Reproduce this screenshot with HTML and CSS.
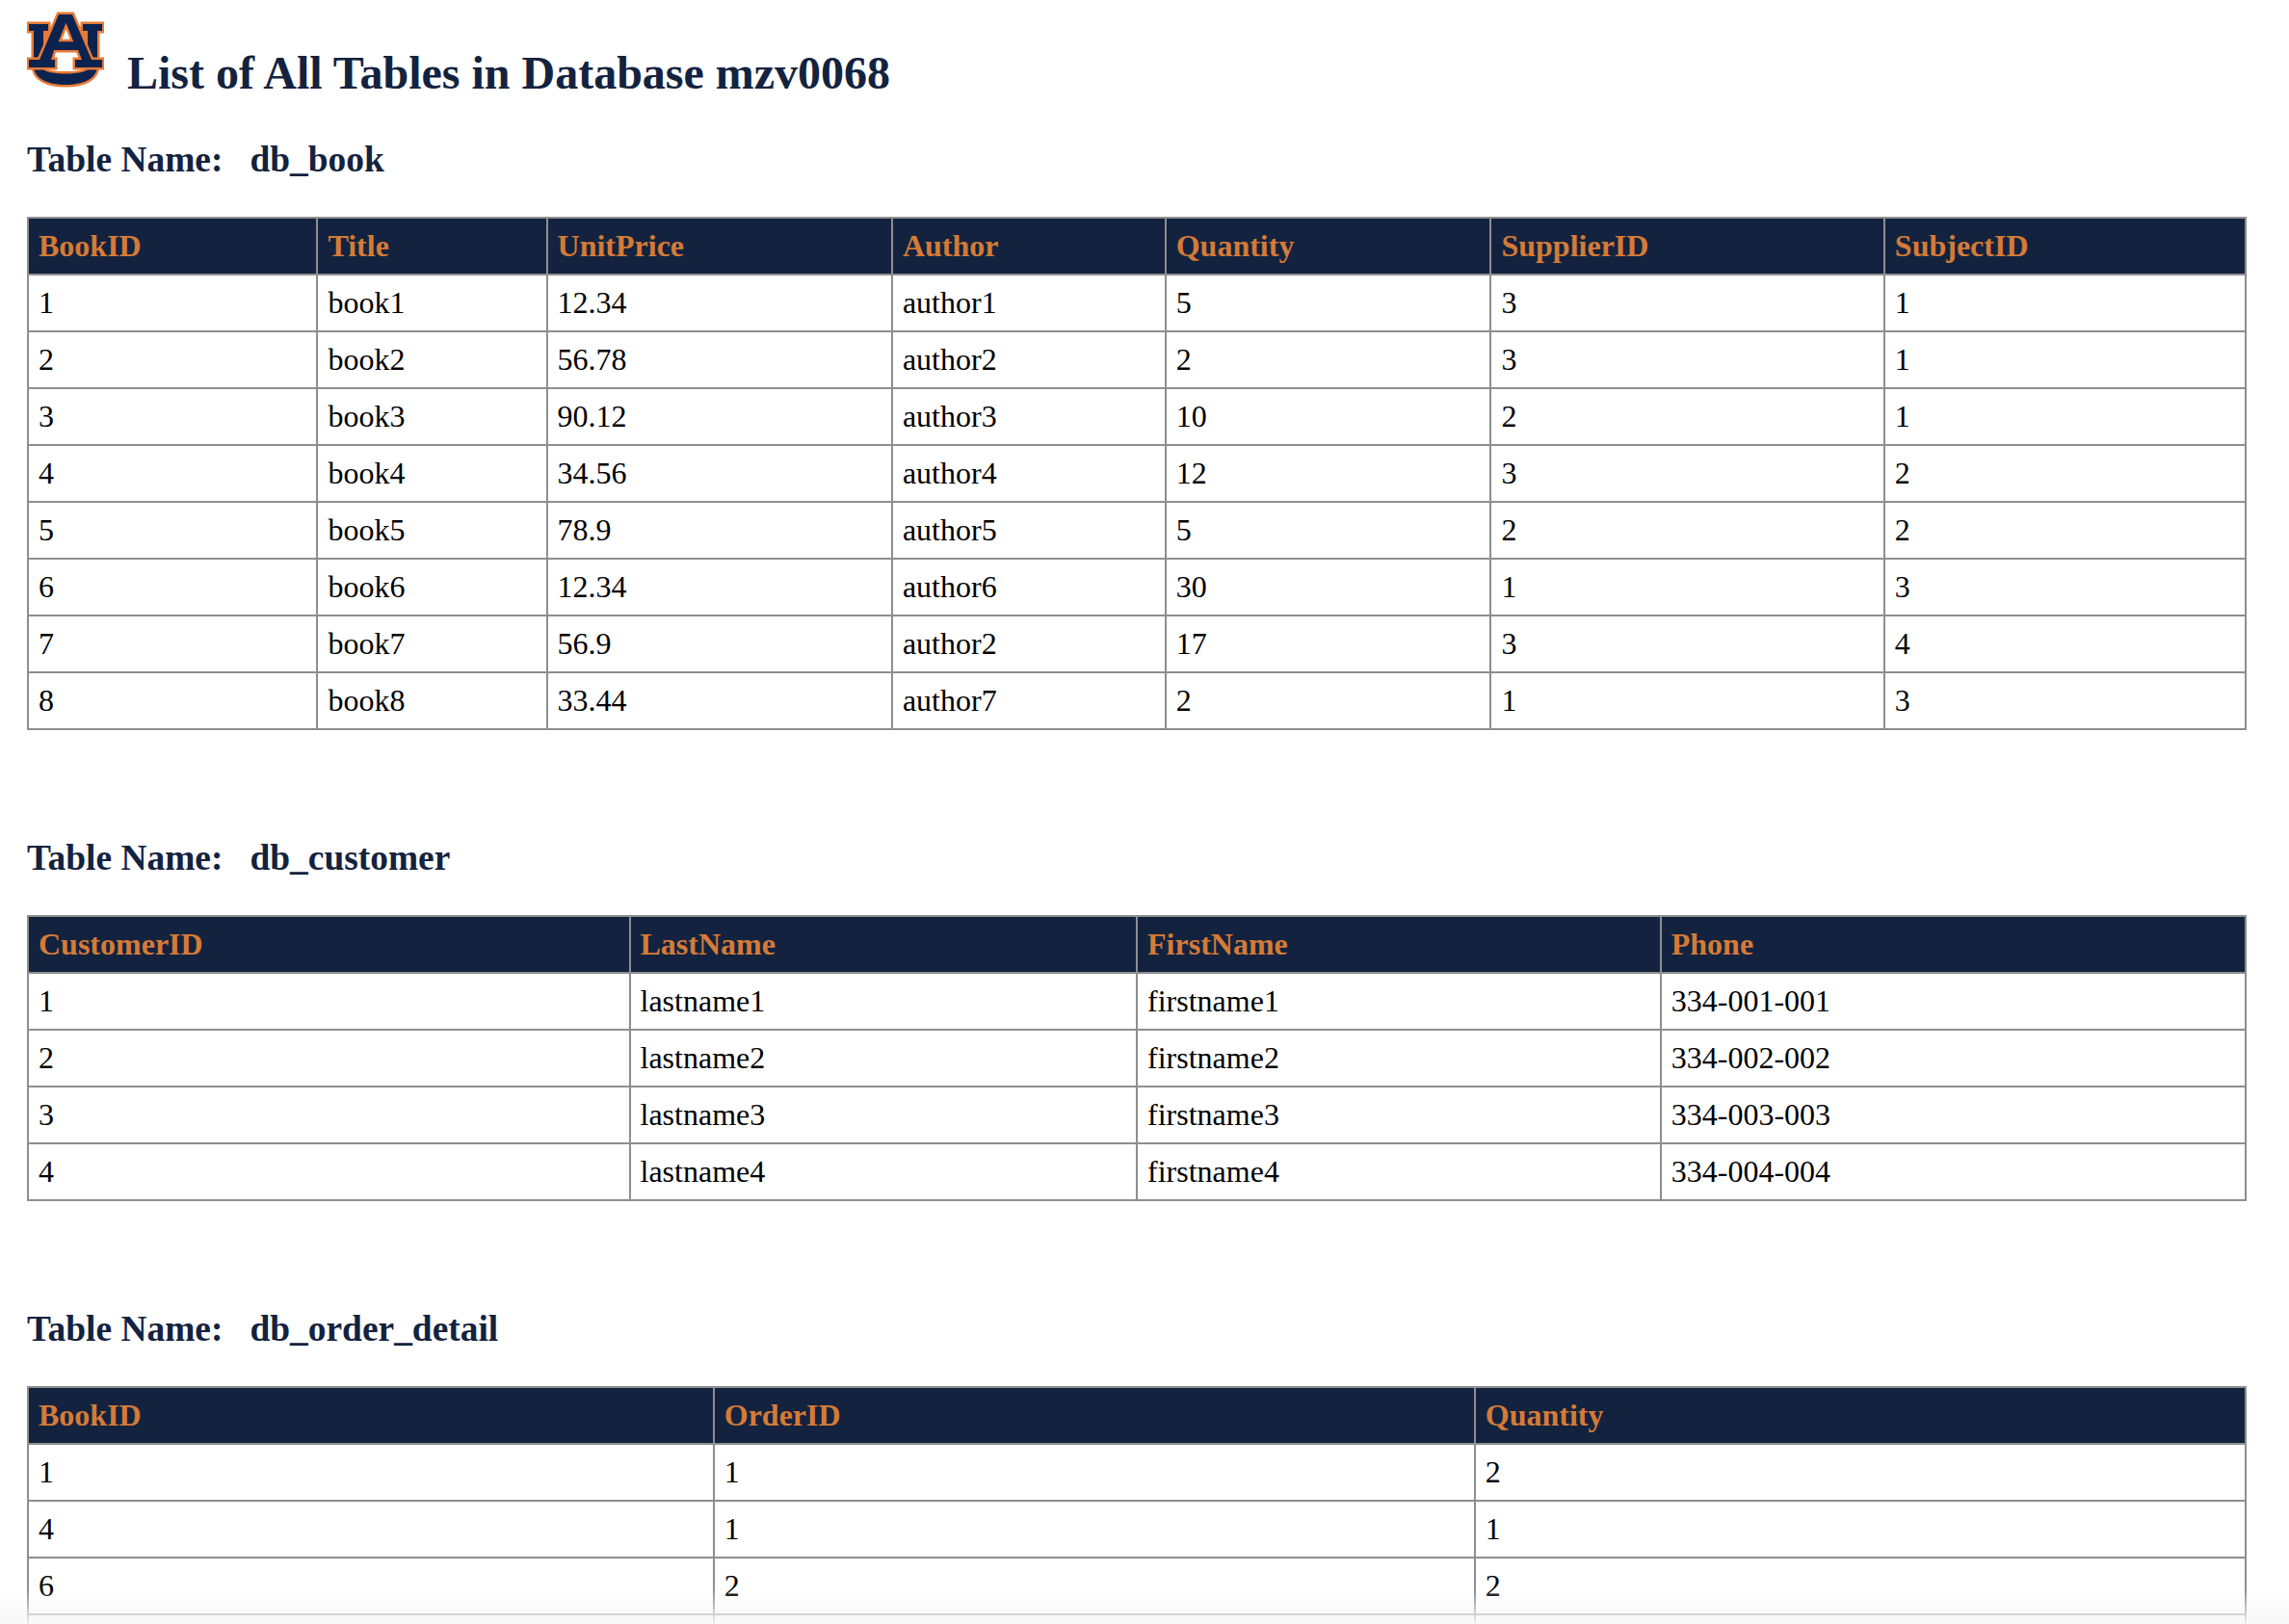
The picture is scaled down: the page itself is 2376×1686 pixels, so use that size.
FILE: index.html
```html
<!DOCTYPE html>
<html lang="en">
<head>
<meta charset="utf-8">
<title>List of All Tables</title>
<link rel="stylesheet" href="styles.css">
</head>
<body>
<header class="page-head">
<svg class="logo" viewBox="0 0 80 80" aria-label="AU logo">
  <path class="wedge" d="M17 16H30L20 40H17ZM63 16H50L60 40H63Z"/>
  <path class="shape" d="M2 13H22V20H17V60C22 66 58 66 63 60V20H58V13H78V20H73V56C73 70 58 76 40 76C22 76 7 70 7 56V20H2Z"/>
  <path class="wedge" d="M20 20H28L21 36H20ZM60 20H52L59 36H60Z"/>
  <path class="shape" d="M33 3H47L67 50H78V58H50V50H57L53 40H28L25 50H29V58H2V50H13Z"/>
  <path class="counter" d="M40.5 15L46.5 30H34.5Z"/>
</svg>
<h1 class="title">List of All Tables in Database mzv0068</h1>
</header>

<h2 class="table-name">Table Name:&nbsp;&nbsp;&nbsp;db_book</h2>
<table>
<thead><tr><th>BookID</th><th>Title</th><th>UnitPrice</th><th>Author</th><th>Quantity</th><th>SupplierID</th><th>SubjectID</th></tr></thead>
<tbody>
<tr><td>1</td><td>book1</td><td>12.34</td><td>author1</td><td>5</td><td>3</td><td>1</td></tr>
<tr><td>2</td><td>book2</td><td>56.78</td><td>author2</td><td>2</td><td>3</td><td>1</td></tr>
<tr><td>3</td><td>book3</td><td>90.12</td><td>author3</td><td>10</td><td>2</td><td>1</td></tr>
<tr><td>4</td><td>book4</td><td>34.56</td><td>author4</td><td>12</td><td>3</td><td>2</td></tr>
<tr><td>5</td><td>book5</td><td>78.9</td><td>author5</td><td>5</td><td>2</td><td>2</td></tr>
<tr><td>6</td><td>book6</td><td>12.34</td><td>author6</td><td>30</td><td>1</td><td>3</td></tr>
<tr><td>7</td><td>book7</td><td>56.9</td><td>author2</td><td>17</td><td>3</td><td>4</td></tr>
<tr><td>8</td><td>book8</td><td>33.44</td><td>author7</td><td>2</td><td>1</td><td>3</td></tr>
</tbody>
</table>

<h2 class="table-name">Table Name:&nbsp;&nbsp;&nbsp;db_customer</h2>
<table>
<thead><tr><th>CustomerID</th><th>LastName</th><th>FirstName</th><th>Phone</th></tr></thead>
<tbody>
<tr><td>1</td><td>lastname1</td><td>firstname1</td><td>334-001-001</td></tr>
<tr><td>2</td><td>lastname2</td><td>firstname2</td><td>334-002-002</td></tr>
<tr><td>3</td><td>lastname3</td><td>firstname3</td><td>334-003-003</td></tr>
<tr><td>4</td><td>lastname4</td><td>firstname4</td><td>334-004-004</td></tr>
</tbody>
</table>

<h2 class="table-name">Table Name:&nbsp;&nbsp;&nbsp;db_order_detail</h2>
<table>
<thead><tr><th>BookID</th><th>OrderID</th><th>Quantity</th></tr></thead>
<tbody>
<tr><td>1</td><td>1</td><td>2</td></tr>
<tr><td>4</td><td>1</td><td>1</td></tr>
<tr><td>6</td><td>2</td><td>2</td></tr>
<tr><td>&nbsp;</td><td>&nbsp;</td><td>&nbsp;</td></tr>
</tbody>
</table>
<div class="fade"></div>
</body>
</html>
```
FILE: styles.css
```css
html, body {
  height: 100%;
  overflow: hidden;
}
body {
  margin: 0;
  padding: 0 44px 0 28px;
  background: #fff;
  font-family: "Liberation Serif", "Times New Roman", serif;
  font-size: 32px;
  color: #000;
}
.page-head {
  display: flex;
  align-items: flex-end;
  gap: 24px;
  padding-top: 12px;
  height: 91px;
}
.logo {
  width: 80px;
  height: 80px;
  flex: none;
  align-self: flex-start;
}
.shape {
  fill: #0c2350;
  stroke: #e87a35;
  stroke-width: 5;
  stroke-linejoin: miter;
  paint-order: stroke;
}
.wedge {
  fill: #e87a35;
}
.counter {
  fill: #fff;
  stroke: #e87a35;
  stroke-width: 2.5;
}
.title {
  margin: 0;
  font-size: 48px;
  line-height: 55px;
  color: #13233f;
}
.table-name {
  margin: 0;
  font-size: 37.44px;
  line-height: 43px;
  color: #13233f;
  padding-top: 41px;
  padding-bottom: 38px;
}
table + .table-name {
  margin-top: 70px;
}
table {
  width: 100%;
  border-collapse: collapse;
}
th, td {
  border: 2px solid #8e8e8e;
  padding: 10px;
  text-align: left;
  font-size: 32px;
  line-height: 37px;
}
th {
  background: #13233f;
  color: #d57b37;
}
.fade {
  position: fixed;
  left: 0;
  right: 0;
  bottom: 0;
  height: 36px;
  background: linear-gradient(to bottom, rgba(247,247,247,0), rgba(247,247,247,0.9));
  pointer-events: none;
}
```
